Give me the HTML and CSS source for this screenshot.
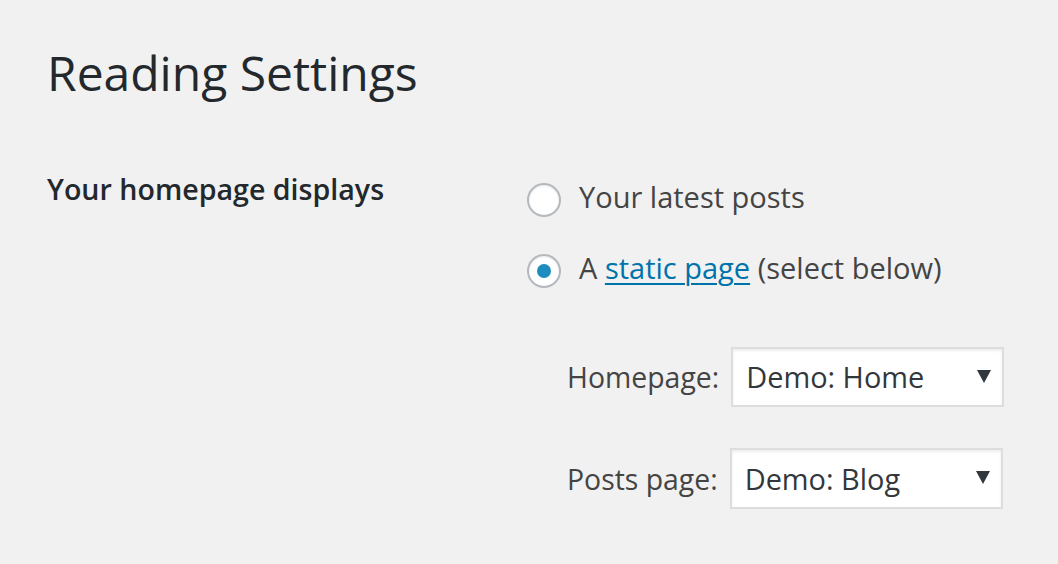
FILE: index.html
```html
<!DOCTYPE html>
<html lang="en">
<head>
<meta charset="utf-8">
<title>Reading Settings</title>
<link rel="stylesheet" href="styles.css">
</head>
<body>
<div class="wrap">
  <h1 class="page-title">Reading Settings</h1>
  <div class="form-row">
    <div class="row-label">Your homepage displays</div>
    <div class="row-field">
      <label class="radio-row">
        <span class="radio"></span>
        <span class="radio-text">Your latest posts</span>
      </label>
      <label class="radio-row">
        <span class="radio radio-checked"></span>
        <span class="radio-text">A <a class="link" href="#">static page</a> (select below)</span>
      </label>
      <ul class="page-selects">
        <li class="select-row">
          <span class="select-label">Homepage:</span>
          <span class="select select-home"><span class="select-value">Demo: Home</span><svg class="select-arrow" width="14" height="13" viewBox="0 0 14 13"><polygon points="0,0 14,0 7,13" fill="#32373c"/></svg></span>
        </li>
        <li class="select-row">
          <span class="select-label">Posts page:</span>
          <span class="select"><span class="select-value">Demo: Blog</span><svg class="select-arrow" width="14" height="13" viewBox="0 0 14 13"><polygon points="0,0 14,0 7,13" fill="#32373c"/></svg></span>
        </li>
      </ul>
    </div>
  </div>
</div>
</body>
</html>
```

FILE: styles.css
```css
html, body {
  margin: 0;
  padding: 0;
}
body {
  background: #f1f1f1;
  font-family: "Open Sans", "Noto Sans", sans-serif;
  color: #444;
  width: 1058px;
  height: 564px;
  overflow: hidden;
}
.wrap {
  padding-left: 47px;
}
.page-title {
  margin: 0;
  padding-top: 41px;
  font-size: 48px;
  line-height: 64px;
  font-weight: 400;
  color: #23282d;
}
.form-row {
  display: flex;
  margin-top: 59px;
}
.row-label {
  width: 480px;
  flex: none;
  padding-top: 5px;
  font-size: 28.6px;
  line-height: 40px;
  font-weight: 600;
  color: #23282d;
}
.row-field {
  display: flex;
  flex-direction: column;
}
.radio-row {
  display: flex;
  align-items: center;
  height: 71px;
  font-size: 29px;
  line-height: 40px;
}
.radio-text {
  padding-bottom: 5px;
}
.radio {
  width: 30px;
  height: 30px;
  border: 2px solid #b4b9be;
  border-radius: 50%;
  background: #fff;
  box-shadow: inset 0 1px 2px rgba(0,0,0,0.1);
  margin-right: 18px;
  display: flex;
  align-items: center;
  justify-content: center;
  flex: none;
}
.radio-checked::before {
  content: "";
  width: 14px;
  height: 14px;
  border-radius: 50%;
  background: #1e8cbe;
}
.link {
  color: #0073aa;
  text-decoration: underline;
  text-decoration-thickness: 2px;
  text-underline-offset: 4px;
}
.page-selects {
  list-style: none;
  margin: 41px 0 0 40px;
  padding: 0;
  display: flex;
  flex-direction: column;
  gap: 41px;
}
.select-row {
  display: flex;
  align-items: center;
  font-size: 28.4px;
  line-height: 40px;
}
.select-label {
  margin-right: 12px;
}
.select {
  box-sizing: border-box;
  width: 273px;
  height: 61px;
  border: 2px solid #ddd;
  background: #fff;
  box-shadow: inset 0 2px 3px rgba(0,0,0,0.07);
  display: flex;
  align-items: center;
  justify-content: space-between;
  padding: 0 11px 0 13px;
  color: #32373c;
}
.select-value {
  font-size: 28.9px;
}
.select-home {
  height: 60px;
}
.select-arrow {
  display: block;
  flex: none;
  margin-top: -2px;
}
```
